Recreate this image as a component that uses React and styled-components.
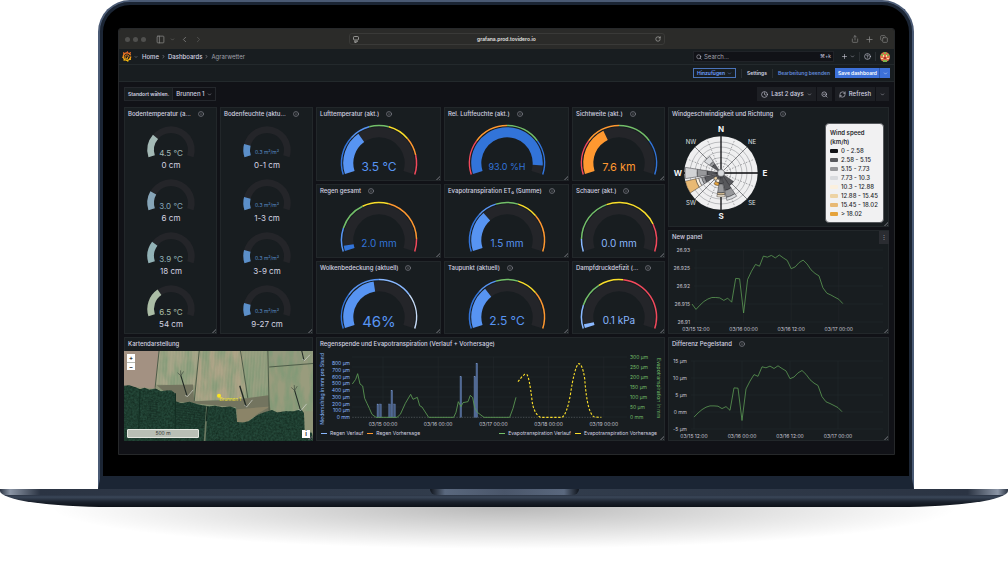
import React, { useState } from 'react'
import styled, { createGlobalStyle } from 'styled-components'
import {
  ChevronDown,
  ChevronLeft,
  ChevronRight,
  CircleHelp,
  Clock,
  Copy,
  Info,
  PanelLeft,
  Plus,
  RefreshCw,
  RotateCw,
  Search,
  Share,
  ZoomOut
} from 'lucide-react'

// palette
const blue = '#5794f2'
const deepBlue = '#3274d9'
const paleBlue = '#8ab8ff'
const green = '#73bf69'
const yellow = '#fade2a'
const orange = '#ff9830'
const red = '#f2495c'

const coldToHot = [[0.28, deepBlue], [0.43, blue], [0.57, green], [0.73, yellow], [0.86, orange], [1, red]]
const coldToWarm = [[0.28, deepBlue], [0.42, blue], [0.58, green], [0.73, yellow], [1, orange]]
const lowToHigh = [[0.25, red], [0.5, orange], [0.75, green], [1, deepBlue]]

const gauges = [
  { title: 'Lufttemperatur (akt.)', value: 0.337, text: '3.5 °C', size: 12, color: blue, steps: coldToHot },
  { title: 'Rel. Luftfeuchte (akt.)', value: 0.935, text: '93.0 %H', size: 9, color: deepBlue, steps: lowToHigh },
  { title: 'Sichtweite (akt.)', value: 0.38, text: '7.6 km', size: 11, color: orange, steps: lowToHigh },
  {
    title: 'Regen gesamt',
    value: 0.04,
    text: '2.0 mm',
    size: 10,
    color: deepBlue,
    steps: [[0.17, blue], [0.38, green], [0.57, yellow], [0.91, orange], [1, red]]
  },
  { title: 'Evapotranspiration ET₀ (Summe)', value: 0.31, text: '1.5 mm', size: 10, color: blue, steps: coldToWarm },
  {
    title: 'Schauer (akt.)',
    value: 0,
    text: '0.0 mm',
    size: 10,
    color: paleBlue,
    steps: [[0.09, paleBlue], [0.41, green], [0.8, yellow], [1, red]]
  },
  {
    title: 'Wolkenbedeckung (aktuell)',
    value: 0.46,
    text: '46%',
    size: 15,
    color: blue,
    steps: [[0.25, deepBlue], [0.5, blue], [0.75, paleBlue], [1, '#c8dcf8']]
  },
  { title: 'Taupunkt (aktuell)', value: 0.325, text: '2.5 °C', size: 12, color: blue, steps: coldToWarm },
  {
    title: 'Dampfdruckdefizit (...',
    value: 0.03,
    text: '0.1 kPa',
    size: 10,
    color: paleBlue,
    steps: [[0.17, paleBlue], [0.35, green], [0.53, yellow], [1, red]]
  }
]

const soilTemperature = [
  { label: '0 cm', text: '4.5 °C', value: 0.27, color: '#a3b9b5' },
  { label: '6 cm', text: '3.0 °C', value: 0.22, color: '#86a5b8' },
  { label: '18 cm', text: '3.9 °C', value: 0.255, color: '#92b2b6' },
  { label: '54 cm', text: '6.5 °C', value: 0.34, color: '#abbda5' }
]

const soilMoisture = ['0-1 cm', '1-3 cm', '3-9 cm', '9-27 cm'].map(label => ({
  label,
  text: '0.3 m³/m³',
  value: 0.15,
  color: '#5b8fc9'
}))

// hourly difference in µm, the first sample is 03/15 11:00
const levels = [
  0, -1.5, -0.3, 0.7, 1.4, 1.8, 1.8, 1.7, 1, 1.6, 0.5, 7.1, 7, -2.5, 6.8, 9.1, 11, 10.5, 13.3, 13,
  13.5, 12.8, 13.6, 12.8, 12.1, 9.8, 10.3, 11.5, 12.2, 11.1, 9.5, 8.5, 7.8, 4.5, 3, 2.5, 1.9, 1.3, 0.1
]

const windSpeeds = [
  ['0 - 2.58', '#111216'],
  ['2.58 - 5.15', '#57585c'],
  ['5.15 - 7.73', '#97989b'],
  ['7.73 - 10.3', '#d9dbde'],
  ['10.3 - 12.88', '#fbf0de'],
  ['12.88 - 15.45', '#edd3a4'],
  ['15.45 - 18.02', '#e8b974'],
  ['> 18.02', '#e5a33c']
]

const polar = (cx, cy, r, deg) => {
  const a = (deg * Math.PI) / 180
  return `${(cx + r * Math.cos(a)).toFixed(2)} ${(cy + r * Math.sin(a)).toFixed(2)}`
}

// ring section between two fractions of the 216° gauge sweep
const band = (cx, cy, inner, outer, from, to) => {
  const a = 162 + from * 216
  const b = 162 + to * 216
  const large = b - a > 180 ? 1 : 0
  return `M${polar(cx, cy, outer, a)}A${outer} ${outer} 0 ${large} 1 ${polar(cx, cy, outer, b)}L${polar(cx, cy, inner, b)}A${inner} ${inner} 0 ${large} 0 ${polar(cx, cy, inner, a)}Z`
}

const petal = (inner, outer, bearing, half) => {
  const a = bearing - 90 - half
  const b = bearing - 90 + half
  return `M${polar(53, 52, outer, a)}A${outer} ${outer} 0 0 1 ${polar(53, 52, outer, b)}L${polar(53, 52, inner, b)}A${inner} ${inner} 0 0 0 ${polar(53, 52, inner, a)}Z`
}

const Gauge = ({ value, text, size, color, steps }) => (
  <Drawing viewBox='0 0 94 59' role='img' aria-label={text}>
    {steps.map(([end, fill], i) => (
      <path key={i} d={band(47, 42, 36.8, 38.3, i ? steps[i - 1][0] : 0, end)} fill={fill} />
    ))}
    <path d={band(47, 42, 25.7, 35.8, 0, 1)} fill='#242529' />
    {value > 0 && <path d={band(47, 42, 25.7, 35.8, 0, value)} fill={color} />}
    <text x='47' y={size > 12 ? 52 : size > 10 ? 50 : 49} fontSize={size} fill={color} textAnchor='middle'>{text}</text>
  </Drawing>
)

const SmallGauge = ({ value, text, color, label }) => (
  <Drawing viewBox='0 0 93 53' role='img' aria-label={label}>
    <path d={band(47, 29, 17, 23.7, 0, 1)} fill='#242529' />
    <path d={band(47, 29, 17, 23.7, 0, value)} fill={color} />
    <text x='47' y={text.length > 6 ? 33 : 35} fontSize={text.length > 6 ? 5 : 8} fill={color} textAnchor='middle'>{text}</text>
    <text x='47' y='47' fontSize='8' fill='#d4d4e2' textAnchor='middle'>{label}</text>
  </Drawing>
)

const LevelChart = ({ label, ticks, top, step, x0, halfDay, edge, labelY, skip = 0 }) => {
  const zero = top + step * 3
  const points = levels
    .map((d, i) => `${(x0 + ((i - 1) * halfDay) / 12).toFixed(1)},${(zero - (d * step) / 5).toFixed(1)}`)
    .slice(skip)
    .join(' ')
  return (
    <Drawing viewBox='0 0 221 89' role='img' aria-label={label}>
      {ticks.map((tick, i) => (
        <g key={tick}>
          <path d={`M${edge + 4} ${top + i * step}H215`} stroke='#24282c' strokeWidth='0.6' />
          <text x={edge} y={top + i * step + 2} textAnchor='end'>{tick}</text>
        </g>
      ))}
      {['03/15 12:00', '03/16 00:00', '03/16 12:00', '03/17 00:00'].map((tick, i) => (
        <g key={tick}>
          <path d={`M${x0 + i * halfDay} ${top}V${top + step * 4}`} stroke='#24282c' strokeWidth='0.6' />
          <text x={x0 + i * halfDay} y={labelY} textAnchor='middle'>{tick}</text>
        </g>
      ))}
      <polyline points={points} fill='none' stroke='#5c9a54' strokeWidth='0.8' strokeLinejoin='round' />
    </Drawing>
  )
}

const RainChart = () => (
  <Drawing viewBox='0 0 349 77' role='img' aria-label='Regenspende und Evapotranspiration'>
    {[0, 1, 2, 3, 4, 5, 6].map(i => (
      <path key={i} d={`M36 ${6 + i * 10}H311`} stroke='#24282c' strokeWidth='0.6' />
    ))}
    <g fill={paleBlue} textAnchor='end'>
      {['800 µm', '700 µm', '600 µm', '500 µm', '400 µm', '300 µm', '200 µm', '100 µm', '0 mm'].map((t, i) => (
        <text key={t} x='34' y={14 + i * 6.75}>{t}</text>
      ))}
    </g>
    <g fill={green}>
      {['300 µm', '250 µm', '200 µm', '150 µm', '100 µm', '50 µm', '0 mm'].map((t, i) => (
        <text key={t} x='314' y={8 + i * 10}>{t}</text>
      ))}
    </g>
    {['03/15 00:00', '03/16 00:00', '03/17 00:00', '03/18 00:00', '03/19 00:00'].map((t, i) => (
      <g key={t}>
        <path d={`M${67 + i * 55.2} 6V66`} stroke='#24282c' strokeWidth='0.6' />
        <text x={67 + i * 55.2} y='75' textAnchor='middle'>{t}</text>
      </g>
    ))}
    <text transform='translate(8 38) rotate(-90)' textAnchor='middle' fill={paleBlue}>Niederschlag in mm pro Stund</text>
    <text transform='translate(341 37) rotate(90)' textAnchor='middle' fill={green}>Evapotranspiration in mm</text>
    <g transform='translate(-4 -16) scale(0.33333)' fill='none' strokeWidth='2.6'>
      <path d='M121 247H868' stroke='#6c7075' strokeWidth='1.6' strokeDasharray='4 4' />
      <g fill='#4a628c' stroke='#7390c2' strokeWidth='1'>
        {[[195, 207], [203, 207], [230, 207], [237, 166], [245, 207], [444, 125], [486, 125], [492, 85]].map(([x, y]) => (
          <rect key={x} x={x} y={y} width='5' height={247 - y} />
        ))}
      </g>
      <polyline
        stroke='#5c9a54'
        points='121,147 131,133 137,116 144,147 152,153 158,190 165,205 172,220 180,238 192,247 255,247 265,238 280,205 296,178 303,193 316,187 323,212 330,216 350,247 425,247 432,232 439,200 447,215 453,203 468,200 475,181 482,188 488,218 496,232 516,247 593,247 603,220 612,187'
      />
      <path
        stroke={yellow}
        strokeWidth='3.4'
        strokeDasharray='7 5'
        d='M618 140L630 125L638 118L645 119Q652 128 660 195Q664 234 685 247H750Q764 240 775 180Q788 94 800 86Q811 86 818 130Q826 240 848 246L868 247'
      />
    </g>
  </Drawing>
)

const WindRose = () => (
  <Compass viewBox='0 0 106 104' role='img' aria-label='Windrose'>
    <circle cx='53' cy='52' r='36.7' fill='#efeff0' />
    <g fill='none' stroke='#85878b' strokeWidth='0.5'>
      {[10, 15.5, 21, 26, 31].map(r => <circle key={r} cx='53' cy='52' r={r} />)}
    </g>
    <g stroke='#55575b' strokeWidth='0.5' strokeDasharray='1.5 1.5'>
      {[22.5, 67.5, 112.5, 157.5, 202.5, 247.5, 292.5, 337.5].map(a => (
        <path key={a} d={`M53 52L${polar(53, 52, 36.7, a)}`} />
      ))}
    </g>
    <g stroke='#36383c' strokeWidth='0.6'>
      {[45, 135, 225, 315].map(a => <path key={a} d={`M53 52L${polar(53, 52, 36.7, a)}`} />)}
    </g>
    <path d='M53 15V89M16 52H90' stroke='#08090b' strokeWidth='1.3' />
    <g stroke='#111216' strokeWidth='0.4'>
      {[
        [3, 14, 270, 9, '#57585c'], [14, 24, 270, 9, '#97989b'], [24, 36, 270, 9, '#d2d3d6'],
        [3, 17, 247, 10, '#57585c'], [17, 20, 247, 10, '#97989b'], [20, 23, 247, 10, '#d9dbde'],
        [23, 26, 247, 10, '#fbf0de'], [26, 36.7, 247, 10, '#e8b974'],
        [3, 11, 315, 11, '#57585c'], [11, 14, 315, 11, '#97989b'], [14, 20, 315, 11, '#d9dbde'],
        [3, 15, 135, 11, '#57585c'],
        [3, 18, 157, 11, '#57585c'], [18, 25, 157, 11, '#97989b'], [25, 28, 157, 11, '#d9dbde'],
        [3, 11, 180, 10, '#57585c'], [11, 20, 180, 10, '#97989b'], [20, 22, 180, 10, '#edd3a4'], [22, 24, 180, 10, '#fbf0de'],
        [3, 7, 202, 11, '#57585c'], [7, 10, 202, 11, '#fbf0de'], [10, 13, 202, 11, '#e5a33c'],
        [3, 6, 225, 11, '#57585c'], [6, 9, 225, 11, '#edd3a4']
      ].map(([a, b, bearing, half, fill], i) => <path key={i} d={petal(a, b, bearing, half)} fill={fill} />)}
    </g>
    <circle cx='53' cy='52' r='3.4' fill='#d9dbde' stroke='#36383c' strokeWidth='0.4' />
    <g textAnchor='middle' fontSize='8' fontWeight='700' fill='#f3f4f6'>
      <text x='53' y='11'>N</text>
      <text x='97' y='55'>E</text>
      <text x='53' y='98'>S</text>
      <text x='10' y='55'>W</text>
    </g>
    <g textAnchor='middle' fontSize='6' fill='#dfe0e4'>
      <text x='23' y='23'>NW</text>
      <text x='84' y='23'>NE</text>
      <text x='84' y='84'>SE</text>
      <text x='23' y='84'>SW</text>
    </g>
  </Compass>
)

const Turbine = ({ x, y, tx, ty }) => (
  <g fill='none'>
    <path d={`M${x} ${y}L${tx} ${ty}`} stroke='#1f2723' strokeWidth='3' />
    <path d={`M${tx} ${ty}l-10 -9M${tx} ${ty}l8 -13M${tx} ${ty}l-1 -16`} stroke='#2d3631' strokeWidth='1.6' />
    <path d={`M${x - 5} ${y}l7 3l17 -20`} stroke='#d6dad4' strokeWidth='2' />
  </g>
)

const Aerial = () => (
  <MapImage viewBox='18 48 565 273' preserveAspectRatio='xMidYMid slice' role='img' aria-label='Luftbild'>
    <defs>
      <filter id='grain' x='0' y='0' width='100%' height='100%' colorInterpolationFilters='sRGB'>
        <feTurbulence type='fractalNoise' baseFrequency='0.16' numOctaves='2' seed='4' />
        <feColorMatrix values='0 0 0 0 0.06  0 0 0 0 0.14  0 0 0 0 0.1  1.2 0 0 0 -0.3' />
        <feComposite in2='SourceGraphic' operator='in' />
      </filter>
      <filter id='soil' x='0' y='0' width='100%' height='100%' colorInterpolationFilters='sRGB'>
        <feTurbulence type='fractalNoise' baseFrequency='0.04 0.012' numOctaves='3' seed='9' />
        <feColorMatrix values='0 0 0 0 0.48  0 0 0 0 0.6  0 0 0 0 0.46  3 0 0 0 -1.1' />
        <feComposite in2='SourceGraphic' operator='in' />
      </filter>
      <pattern id='furrows' width='9' height='9' patternUnits='userSpaceOnUse' patternTransform='rotate(4)'>
        <path d='M2 0V9' stroke='#c9bd9d' strokeWidth='1.5' opacity='0.3' />
      </pattern>
      <pattern id='rows' width='7' height='7' patternUnits='userSpaceOnUse' patternTransform='rotate(8)'>
        <path d='M0 3H7' stroke='#10261d' strokeWidth='2' opacity='0.6' />
      </pattern>
    </defs>
    <path d='M18 48H583V321H18Z' fill='#8f9477' />
    <path d='M18 48H124L112 162L18 156Z' fill='#a39182' />
    <path d='M124 48H243L229 152L112 150Z' fill='#a3a386' />
    <path d='M243 48H370L388 190L228 200Z' fill='#aaa285' />
    <path d='M370 48H446L450 184L388 188Z' fill='#929c7d' />
    <path d='M450 48H583V84L452 98Z' fill='#959a7e' />
    <path d='M452 98L583 86V230L455 228Z' fill='#999c7d' />
    <path d='M124 48H583V230H112Z' fill='#000' filter='url(#soil)' opacity='0.7' />
    <path d='M124 48H450V190L228 200L112 150Z' fill='url(#furrows)' />
    <path d='M116 152L224 150L228 200L350 196L450 182L456 228L360 262L352 218L172 202Z' fill='#73745f' />
    <path d='M356 224L455 216L420 236L385 262L356 268Z' fill='#8b8468' />
    <path d='M123 48L111 160M243 48L228 200M366 48L388 190M448 48L452 228M452 98L583 87' stroke='#4e5d49' strokeWidth='3' fill='none' />
    <path
      id='forest'
      d='M18 154L34 152L52 158L66 164L80 160L94 166L112 162L128 170L146 168L160 168L170 176L172 200L190 206L214 202L240 210L262 214L272 216L290 214L312 218L336 216L352 222L356 262L374 264L390 260L404 250L420 240L440 232L460 226L476 234L500 230L526 230L548 224L556 236L558 292L580 294L583 321H18Z'
      fill='#25493a'
    />
    <use href='#forest' filter='url(#grain)' />
    <path d='M90 194L120 196L118 258L86 256Z M174 208L262 216L258 280L172 274Z' fill='url(#rows)' />
    <path d='M66 164L62 284M172 176L171 284' stroke='#132d22' strokeWidth='3' />
    <path d='M266 216L259 321' stroke='#6b7961' strokeWidth='5' />
    <path d='M268 216L264 260' stroke='#152c22' strokeWidth='4' />
    <Turbine x={206} y={183} tx={188} ty={124} />
    <path d='M383 216L364 154' stroke='#1f2723' strokeWidth='4' />
    <path d='M378 212l7 5l17 -21' stroke='#d6dad4' strokeWidth='2' fill='none' />
    <Turbine x={545} y={225} tx={528} ty={168} />
    <path d='M556 78L549 48' stroke='#1f2723' strokeWidth='3' />
    <path d='M552 74l5 5l17 -18' stroke='#d6dad4' strokeWidth='2' fill='none' />
    <circle cx='302' cy='184' r='6' fill='#fbe51e' />
    <text x='336' y='198' fontSize='14' fill='#f2e22a' textAnchor='middle'>Brunnen 1</text>
  </MapImage>
)

const Logo = () => (
  <svg width='10' height='11' viewBox='0 0 24 26' fill='none' aria-hidden='true'>
    <defs>
      <linearGradient id='flame' x1='0' y1='26' x2='0' y2='0' gradientUnits='userSpaceOnUse'>
        <stop offset='0' stopColor='#fbca0a' />
        <stop offset='1' stopColor='#f05a28' />
      </linearGradient>
    </defs>
    <g stroke='url(#flame)' strokeLinecap='round'>
      <path d='M20 9a9 9 0 1 0 1 5' strokeWidth='3' />
      <path d='M17 14a5 5 0 1 0-5 5a3.200 3.200 0 0 0 1-5' strokeWidth='2.200' />
      <path d='M12 4L13 2M18 6L20 4M5 7L4 4M3 14L2 15M6 20L5 22M12 22L14 24M18 19L20 20' strokeWidth='3' />
    </g>
  </svg>
)

const Avatar = () => (
  <svg width='10' height='10' viewBox='0 0 10 10' aria-hidden='true'>
    <circle cx='5' cy='5' r='5' fill='#e0704a' />
    <path d='M1 2h2v2H1zM7 2h2v2H7zM4 0h2v2H4zM3 8h4v2H3z' fill='#7fb24a' />
    <path d='M3 3h1v2H3zM6 3h1v2H6zM1 6h2v1H1zM7 6h2v1H7z' fill='#f5dfa0' />
    <path d='M4 5h2v2H4z' fill='#a8322e' />
  </svg>
)

const DashPanel = ({ name, title, info, action, children }) => (
  <Panel $name={name}>
    <PanelHead>
      <PanelTitle>{title}</PanelTitle>
      {info && <Info size={6} aria-label='Info' />}
      {action}
    </PanelHead>
    {children}
  </Panel>
)

const App = () => {
  const [site, setSite] = useState('Brunnen 1')

  return (
    <Page>
      <GlobalStyle />
      <Lid>
        <Screen>
          <BrowserBar>
            <BarGroup>
              <Dots><i /><i /><i /></Dots>
              <PanelLeft size={9} />
              <ChevronDown size={5} />
              <ChevronLeft size={9} />
              <ChevronRight size={9} opacity={0.5} />
            </BarGroup>
            <Address>
              <svg width='6' height='7' viewBox='0 0 12 14' fill='none' stroke='#b0b0ae' strokeWidth='1.6' aria-hidden='true'>
                <rect x='1' y='1' width='10' height='7' rx='2' />
                <path d='M2 10.500H10M3 13H7' />
              </svg>
              <input aria-label='Adresse' defaultValue='grafana.prod.tovidero.io' />
              <RotateCw size={6} color='#d0d0ce' />
            </Address>
            <BarGroup $end>
              <Share size={8} />
              <Plus size={9} />
              <Copy size={8} />
            </BarGroup>
          </BrowserBar>

          <TopBar>
            <Logo />
            <ChevronDown size={4} />
            <Crumbs aria-label='Breadcrumb'>
              <a href='#home'>Home</a>
              <ChevronRight size={5} />
              <a href='#dashboards'>Dashboards</a>
              <ChevronRight size={5} />
              <span>Agrarwetter</span>
            </Crumbs>
            <SearchBox>
              <Search size={6} />
              <input type='search' aria-label='Search' placeholder='Search...' />
              <kbd>⌘+k</kbd>
            </SearchBox>
            <IconButton aria-label='Neu'><Plus size={7} /><ChevronDown size={5} /></IconButton>
            <Divider />
            <IconButton aria-label='Hilfe'><CircleHelp size={7} /></IconButton>
            <Divider />
            <IconButton aria-label='Profil'><Avatar /></IconButton>
          </TopBar>

          <ActionBar>
            <OutlineButton>Hinzufügen <ChevronDown size={5} /></OutlineButton>
            <Divider />
            <TextButton>Settings</TextButton>
            <Divider />
            <TextButton $blue>Bearbeitung beenden</TextButton>
            <SaveGroup>
              <button>Save dashboard</button>
              <button aria-label='Weitere Optionen'><ChevronDown size={5} /></button>
            </SaveGroup>
          </ActionBar>

          <Controls>
            <Variable>
              <label htmlFor='site'>Standort wählen.</label>
              <div>
                <select id='site' value={site} onChange={e => setSite(e.target.value)}>
                  <option>Brunnen 1</option>
                </select>
                <ChevronDown size={5} />
              </div>
            </Variable>
            <ButtonGroup $push>
              <button><Clock size={7} /> Last 2 days <ChevronDown size={5} /></button>
              <button aria-label='Zoom out'><ZoomOut size={7} /></button>
            </ButtonGroup>
            <ButtonGroup>
              <button><RefreshCw size={7} /> Refresh</button>
              <button aria-label='Intervall'><ChevronDown size={5} /></button>
            </ButtonGroup>
          </Controls>

          <Dashboard>
            <DashPanel name='temp' title='Bodentemperatur (a...' info>
              {soilTemperature.map(item => <SmallGauge key={item.label} {...item} />)}
            </DashPanel>
            <DashPanel name='moist' title='Bodenfeuchte (aktu...' info>
              {soilMoisture.map(item => <SmallGauge key={item.label} {...item} />)}
            </DashPanel>
            {gauges.map((gauge, i) => (
              <DashPanel key={gauge.title} name={`g${i + 1}`} title={gauge.title} info>
                <GaugeBody><Gauge {...gauge} /></GaugeBody>
              </DashPanel>
            ))}
            <DashPanel name='wind' title='Windgeschwindigkeit und Richtung' info>
              <WindBody>
                <WindRose />
                <WindLegend>
                  <li><strong>Wind speed (km/h)</strong></li>
                  {windSpeeds.map(([range, color]) => (
                    <li key={range}><Swatch $color={color} />{range}</li>
                  ))}
                </WindLegend>
              </WindBody>
            </DashPanel>
            <DashPanel name='level' title='New panel' action={<PanelMenu aria-label='Menü'>⋮</PanelMenu>}>
              <LevelChart
                label='New panel'
                ticks={['26.93', '26.925', '26.92', '26.915', '26.91']}
                top={6}
                step={18}
                x0={28}
                halfDay={47.6}
                edge={22}
                labelY={87}
              />
            </DashPanel>
            <DashPanel name='map' title='Kartendarstellung'>
              <MapBody>
                <Aerial />
                <ZoomControls>
                  <button aria-label='Zoom in'>+</button>
                  <button aria-label='Zoom out'>−</button>
                </ZoomControls>
                <ScaleBar>500 m</ScaleBar>
                <MapInfo aria-label='Attribution'>i</MapInfo>
              </MapBody>
            </DashPanel>
            <DashPanel name='rain' title='Regenspende und Evapotranspiration (Verlauf + Vorhersage)'>
              <RainChart />
              <ChartLegend>
                <li><Dash $color={paleBlue} />Regen Verlauf</li>
                <li><Dash $color={orange} $dashed />Regen Vorhersage</li>
                <li><Dash $color={green} />Evapotranspiration Verlauf</li>
                <li><Dash $color={yellow} $dashed />Evapotranspiration Vorhersage</li>
              </ChartLegend>
            </DashPanel>
            <DashPanel name='diff' title='Differenz Pegelstand' info>
              <LevelChart
                label='Differenz Pegelstand'
                ticks={['15 µm', '10 µm', '5 µm', '0 mm', '-5 µm']}
                top={10}
                step={17}
                x0={26}
                halfDay={48}
                edge={19}
                labelY={87}
                skip={1}
              />
            </DashPanel>
          </Dashboard>
        </Screen>
      </Lid>
      <Base><Notch /></Base>
      <Shadow />
    </Page>
  )
}

export default App

const GlobalStyle = createGlobalStyle`
  * {
    box-sizing: border-box;
  }
  body {
    margin: 0;
    background: #fff;
    font-family: Inter, 'Liberation Sans', sans-serif;
    font-size: 6px;
    line-height: 1;
    color: #d4d4e2;
  }
  button, input, select {
    font: inherit;
    color: inherit;
    border: 0;
    padding: 0;
    margin: 0;
    background: none;
    outline: 0;
  }
  svg {
    display: block;
    flex: none;
  }
  a {
    color: inherit;
    text-decoration: none;
  }
`

const Page = styled.main`
  overflow: hidden;
`

const Lid = styled.div`
  margin: 0 94px 0 98px;
  padding: 26px 17px 24px 18px;
  background: #000;
  border: 2px solid #4a5a74;
  border-bottom: 10px solid #1b2534;
  border-radius: 32px 32px 0 0;
  box-shadow: inset 0 0 0 3px #1b2534;
`

const Screen = styled.div`
  padding-bottom: 13px;
  background: #111217;
  border: 1px solid #26282a;
  border-radius: 3px 3px 0 0;
  overflow: hidden;
`

const BrowserBar = styled.div`
  display: grid;
  grid-template-columns: 1fr 316px 1fr;
  align-items: center;
  height: 20px;
  padding: 0 6px;
  background: #2b2b29;
  color: #8a8a88;
`

const BarGroup = styled.div`
  display: flex;
  align-items: center;
  justify-content: ${props => (props.$end ? 'flex-end' : 'flex-start')};
  gap: ${props => (props.$end ? 6 : 5)}px;
`

const Dots = styled.span`
  display: flex;
  gap: 3px;
  margin-right: 5px;

  i {
    width: 5px;
    height: 5px;
    border-radius: 50%;
    background: #50504e;
  }
`

const Address = styled.div`
  display: flex;
  align-items: center;
  height: 12px;
  padding: 0 3px;
  border: 1px solid #3a3a38;
  border-radius: 3px;

  input {
    flex: 1;
    min-width: 0;
    text-align: center;
    font-size: 5px;
    font-weight: 600;
    color: #e4e4e2;
  }
`

const TopBar = styled.header`
  display: flex;
  align-items: center;
  gap: 2px;
  height: 16px;
  padding: 0 2px 0 3px;
  background: #181d20;
  border-bottom: 1px solid #23292c;
`

const Crumbs = styled.nav`
  display: flex;
  align-items: center;
  gap: 2px;
  margin: 0 auto 0 2px;
  font-weight: 500;

  span {
    font-weight: 400;
    color: #a0a1ab;
  }
`

const SearchBox = styled.label`
  display: flex;
  align-items: center;
  gap: 2px;
  width: 141px;
  height: 11px;
  margin-right: 3px;
  padding: 0 2px;
  background: #111217;
  border: 1px solid #202328;

  input {
    flex: 1;
    min-width: 0;
  }
  input::placeholder {
    color: #a0a1ab;
  }
  kbd {
    font: inherit;
    font-size: 5px;
  }
`

const IconButton = styled.button`
  display: flex;
  align-items: center;
  gap: 2px;
  margin: 0 2px;
`

const Divider = styled.span`
  width: 1px;
  height: 9px;
  background: #2a2f33;
`

const ActionBar = styled.div`
  display: flex;
  align-items: center;
  justify-content: flex-end;
  gap: 5px;
  height: 17px;
  padding: 0 4px;
  font-size: 5px;
  font-weight: 600;
  background: #181d20;
  border-bottom: 1px solid #23292c;
`

const OutlineButton = styled.button`
  display: flex;
  align-items: center;
  gap: 2px;
  height: 10px;
  padding: 0 3px;
  color: #6e9fff;
  border: 1px solid #4a73b8;
`

const TextButton = styled.button`
  color: ${props => (props.$blue ? '#6088d8' : '#d4d4e2')};
`

const SaveGroup = styled.span`
  display: flex;
  height: 10px;
  color: #fff;

  button {
    display: flex;
    align-items: center;
    padding: 0 2px 0 3px;
    background: #3d71d9;
  }
  button + button {
    border-left: 1px solid #2c56ad;
  }
`

const Controls = styled.div`
  display: flex;
  align-items: center;
  gap: 3px;
  padding: 5px 5px 6px;
  font-weight: 500;
`

const Variable = styled.div`
  display: flex;
  align-items: stretch;
  height: 14px;
  border: 1px solid #24272c;

  label {
    display: flex;
    align-items: center;
    padding: 0 3px;
    font-size: 5px;
    font-weight: 600;
    background: #181d20;
  }
  div {
    display: flex;
    align-items: center;
    gap: 2px;
    padding: 0 3px;
    border-left: 1px solid #24272c;
  }
  select {
    appearance: none;
  }
`

const ButtonGroup = styled.div`
  display: flex;
  height: 14px;
  margin-left: ${props => (props.$push ? 'auto' : 0)};
  background: #1d1f24;

  button {
    display: flex;
    align-items: center;
    gap: 3px;
    padding: 0 4px;
  }
  button + button {
    border-left: 1px solid #111217;
  }
`

const Dashboard = styled.div`
  display: grid;
  grid-template-columns: repeat(24, minmax(0, 1fr));
  grid-template-rows: 74px 43px 28px 73px 104px;
  grid-template-areas:
    'temp temp temp moist moist moist g1 g1 g1 g1 g2 g2 g2 g2 g3 g3 g3 wind wind wind wind wind wind wind'
    'temp temp temp moist moist moist g4 g4 g4 g4 g5 g5 g5 g5 g6 g6 g6 wind wind wind wind wind wind wind'
    'temp temp temp moist moist moist g4 g4 g4 g4 g5 g5 g5 g5 g6 g6 g6 level level level level level level level'
    'temp temp temp moist moist moist g7 g7 g7 g7 g8 g8 g8 g8 g9 g9 g9 level level level level level level level'
    'map map map map map map rain rain rain rain rain rain rain rain rain rain rain diff diff diff diff diff diff diff';
  gap: 3px;
  padding: 0 5px;
`

const Panel = styled.section`
  grid-area: ${props => props.$name};
  position: relative;
  display: flex;
  flex-direction: column;
  min-width: 0;
  background: #181d20;
  box-shadow: inset 0 0 0 1px #22272a;

  &::after {
    content: '';
    position: absolute;
    right: 1px;
    bottom: 1px;
    width: 5px;
    height: 5px;
    background: repeating-linear-gradient(135deg, #4a4d52 0 1px, transparent 1px 2px);
    clip-path: polygon(100% 0, 100% 100%, 0 100%);
  }
`

const PanelHead = styled.header`
  display: flex;
  align-items: center;
  gap: 7px;
  height: 14px;
  padding-left: 4px;
  color: #a0a1ab;
`

const PanelTitle = styled.h2`
  margin: 0;
  font-size: 6px;
  font-weight: 500;
  white-space: nowrap;
  color: #d4d4e2;
`

const PanelMenu = styled.button`
  width: 10px;
  height: 13px;
  margin-left: auto;
  background: #2a2c31;
`

const Drawing = styled.svg`
  width: 100%;
  height: auto;
  font-size: 5px;
  fill: #c4c5d0;
`

const GaugeBody = styled.div`
  display: flex;
  justify-content: center;

  svg {
    width: 94px;
  }
`

const WindBody = styled.div`
  display: flex;
  justify-content: space-between;
  align-items: center;
  padding-right: 5px;
`

const Compass = styled.svg`
  width: 106px;
  height: 104px;
`

const WindLegend = styled.ul`
  width: 59px;
  margin: 0;
  padding: 4px;
  list-style: none;
  line-height: 9px;
  color: #26282c;
  background: #f1f1f2;
  border: 1px solid #55585c;
  border-radius: 4px;

  strong {
    width: 40px;
    font-weight: 600;
    white-space: normal;
  }
  li {
    display: flex;
    align-items: center;
    gap: 3px;
    font-weight: 500;
    white-space: nowrap;
  }
`

const Swatch = styled.i`
  width: 8px;
  height: 4px;
  border-radius: 1px;
  background: ${props => props.$color};
`

const MapBody = styled.div`
  position: relative;
  flex: 1;
  min-height: 0;
`

const MapImage = styled.svg`
  width: 100%;
  height: 100%;
`

const ZoomControls = styled.div`
  position: absolute;
  top: 3px;
  left: 3px;
  display: grid;

  button {
    width: 8px;
    height: 8px;
    font-weight: 700;
    line-height: 8px;
    color: #333;
    background: #fff;
  }
  button + button {
    border-top: 1px solid #b5b8b2;
  }
`

const ScaleBar = styled.div`
  position: absolute;
  bottom: 3px;
  left: 3px;
  width: 72px;
  padding: 1px;
  font-size: 5px;
  text-align: center;
  color: #333;
  background: #b9bfb5;
  border: 1px solid #e4e6e0;
  border-radius: 1px;
`

const MapInfo = styled.button`
  position: absolute;
  right: 3px;
  bottom: 3px;
  width: 8px;
  height: 8px;
  font-weight: 700;
  line-height: 8px;
  color: #333;
  background: #fff;
`

const ChartLegend = styled.ul`
  display: flex;
  gap: 4px;
  margin: 0;
  padding: 2px 8px 0 5px;
  list-style: none;
  font-size: 5px;
  line-height: 7px;

  li {
    display: flex;
    align-items: center;
    gap: 3px;
  }
  li:nth-child(3) {
    margin-left: auto;
  }
`

const Dash = styled.i`
  width: 6px;
  border-top: 1px ${props => (props.$dashed ? 'dashed' : 'solid')} ${props => props.$color};
`

const Base = styled.div`
  height: 18px;
  background:
    linear-gradient(90deg, #2b3443, #8b95a5 1%, #2b3443 4%, #323d4d 50%, #2b3443 96%, #8b95a5 99%, #2b3443) top / 100% 6px no-repeat,
    linear-gradient(180deg, #2b3443 6px, #3a4658 8px, #1a212c 13px, #0c1017 100%);
  border-radius: 0 0 110px 110px / 0 0 16px 16px;
`

const Notch = styled.div`
  width: 149px;
  height: 6px;
  margin: 0 auto;
  background: linear-gradient(90deg, #10151d, #5a687e 10%, #4a566a 50%, #5a687e 90%, #10151d);
  border-radius: 0 0 6px 6px;
`

const Shadow = styled.div`
  height: 42px;
  margin: 0 50px;
  background: radial-gradient(ellipse 50% 100% at 50% 0, rgba(0, 0, 0, 0.28), transparent);
`
